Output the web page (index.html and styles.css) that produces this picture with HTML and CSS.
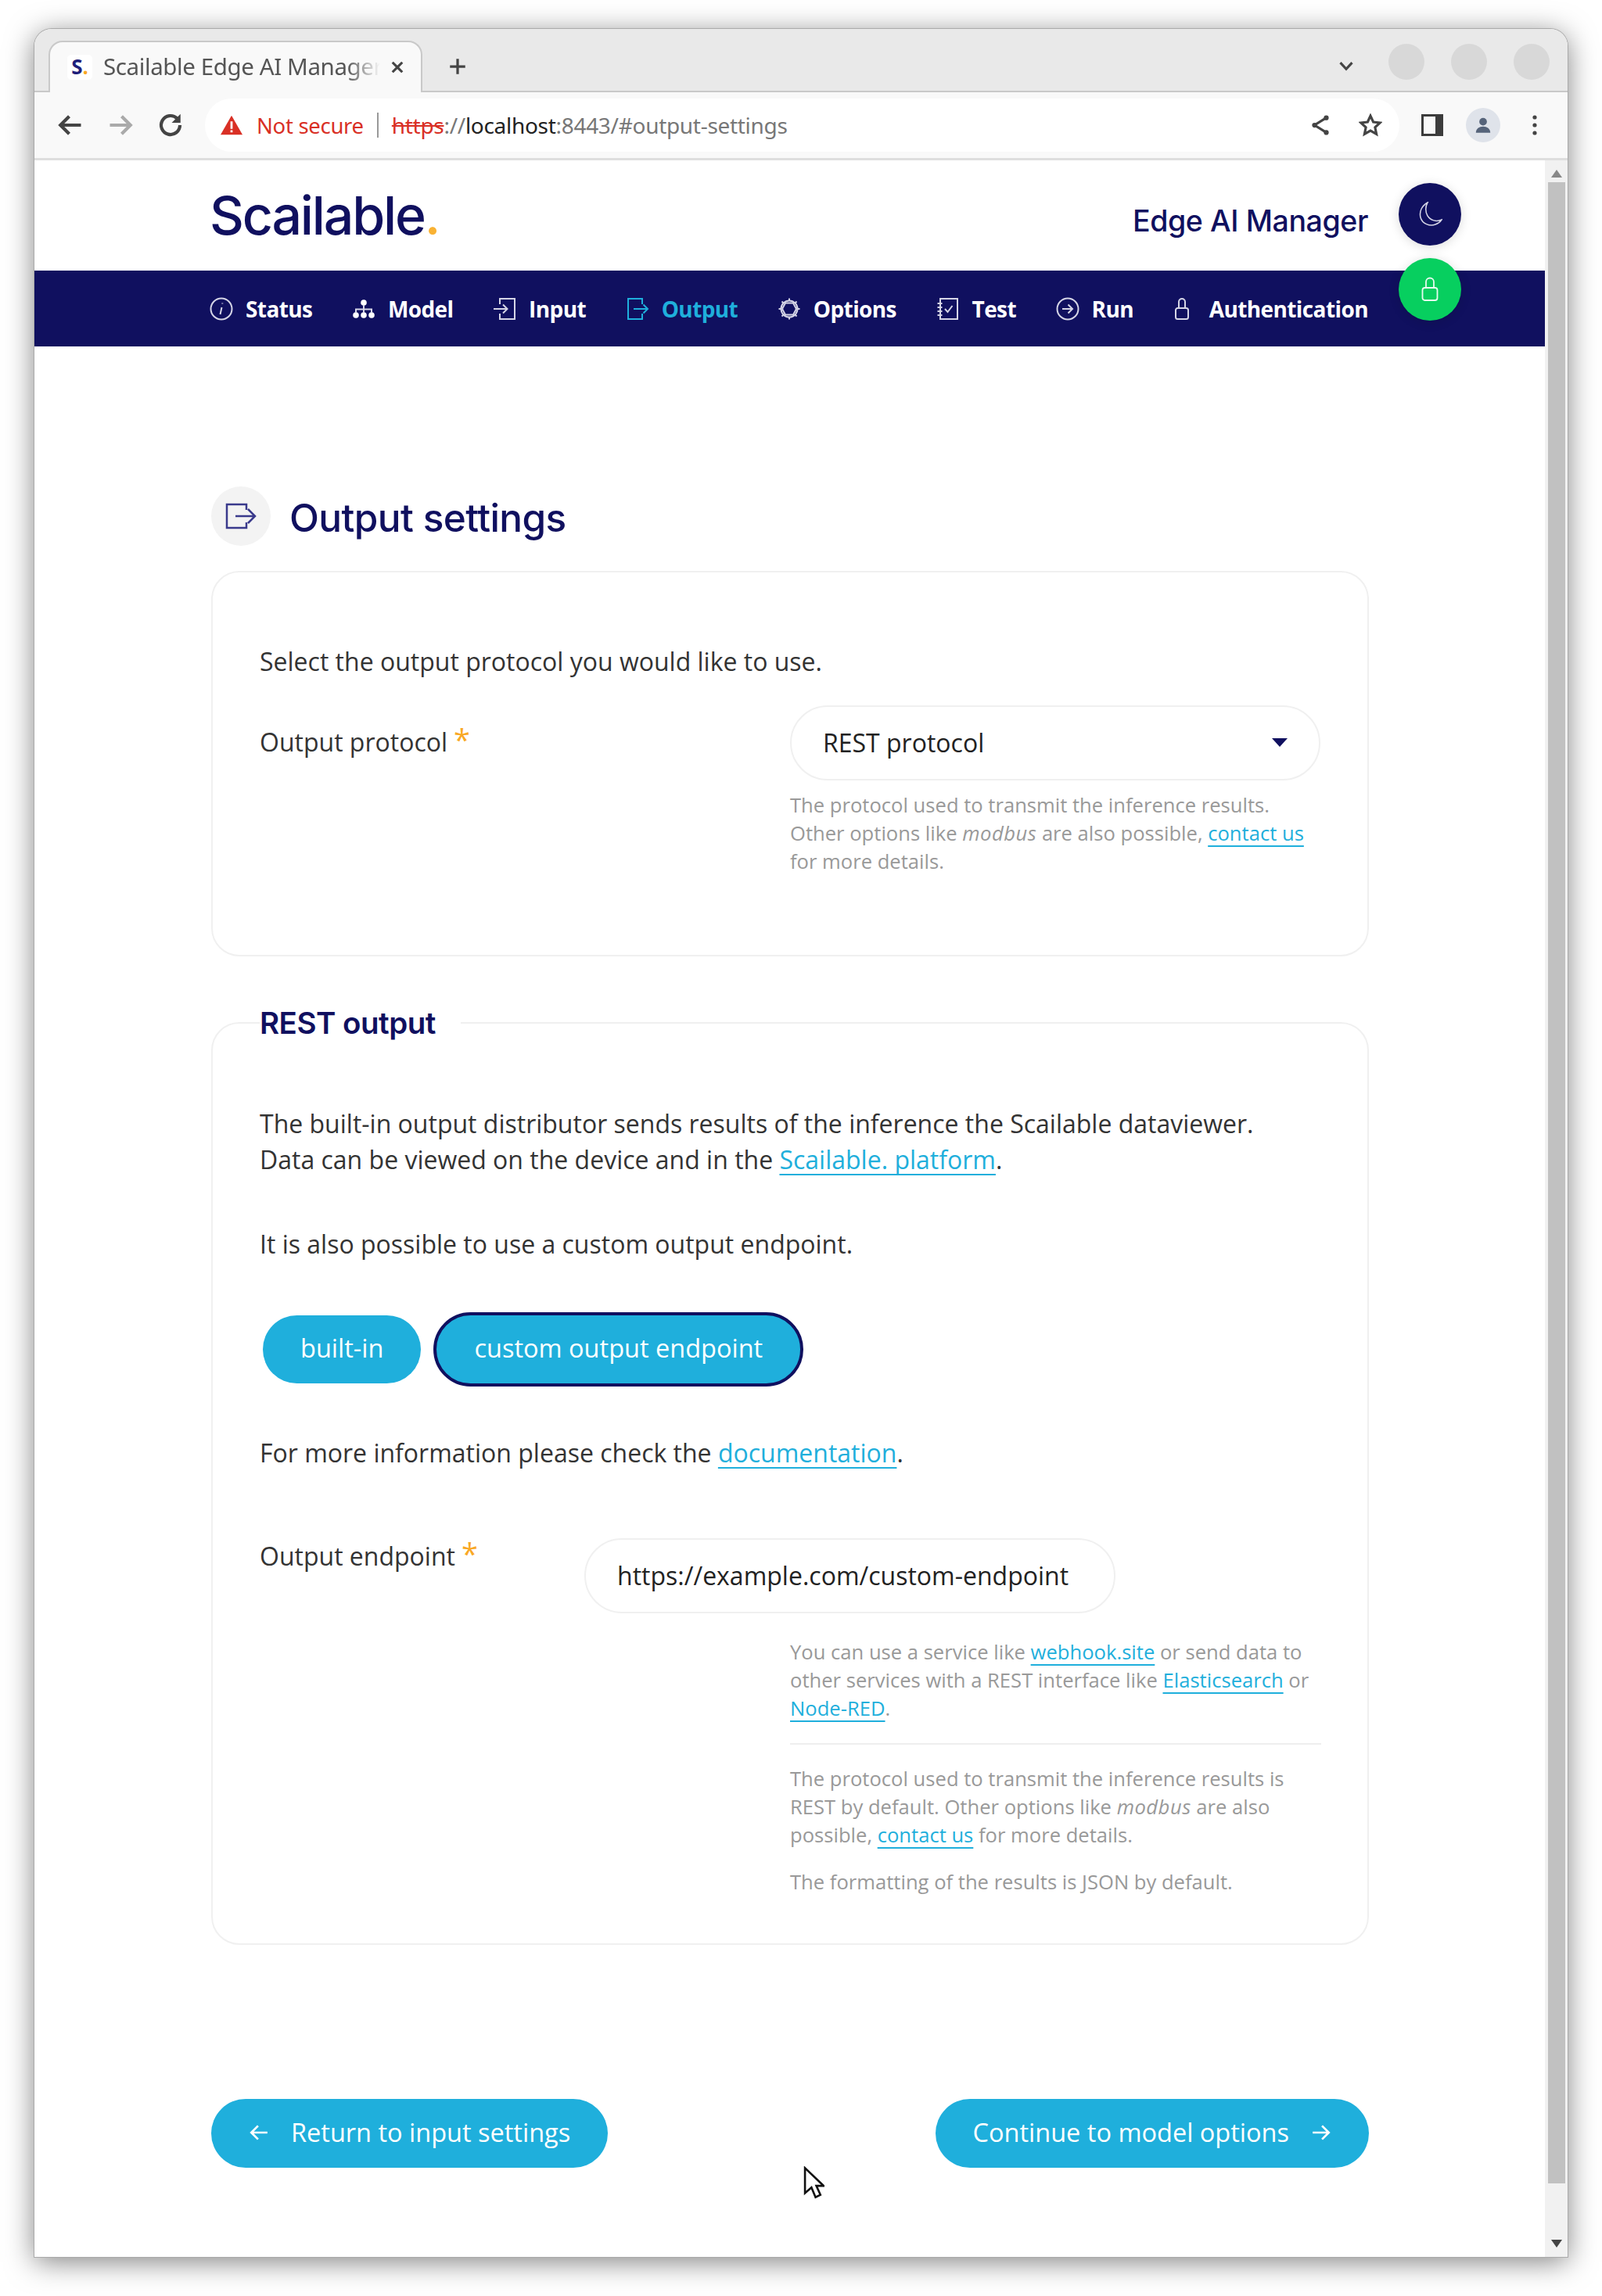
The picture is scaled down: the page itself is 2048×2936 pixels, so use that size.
FILE: index.html
```html
<!DOCTYPE html>
<html lang="en">
<head>
<meta charset="utf-8">
<title>Scailable Edge AI Manager</title>
<link rel="stylesheet" href="styles.css">
</head>
<body>
<div class="window">
  <div class="tabbar">
    <div class="tab">
      <span class="favicon">S<i>.</i></span>
      <span class="tab-title">Scailable Edge AI Manager</span>
      <svg class="tab-close" viewBox="0 0 16 16"><path d="M3 3l10 10M13 3L3 13"/></svg>
    </div>
    <svg class="new-tab" viewBox="0 0 24 24"><path d="M12 3v18M3 12h18"/></svg>
    <div class="tabbar-right">
      <svg class="tab-list" viewBox="0 0 16 10"><path d="M2 1.5l6 6.5 6-6.5"/></svg>
      <span class="win-dot"></span><span class="win-dot"></span><span class="win-dot"></span>
    </div>
  </div>
  <div class="toolbar">
    <svg class="tool" viewBox="0 0 24 24"><path d="M21 12H4M11 4.500L3.500 12l7.500 7.500"/></svg>
    <svg class="tool tool-off" viewBox="0 0 24 24"><path d="M3 12h17M13 4.500l7.500 7.500-7.500 7.500"/></svg>
    <svg class="tool" viewBox="0 0 24 24"><path d="M20 12a8 8 0 1 1-2.400-5.700"/><path class="solid" d="M20.500 2.500v7.500H13z"/></svg>
    <div class="omnibox">
      <svg class="warn" viewBox="0 0 30 26"><path class="warn-tri" d="M15 0l15 26H0z"/><path class="warn-mark" d="M13.500 8h3v10h-3zM13.500 20h3v3h-3z"/></svg>
      <span class="not-secure">Not secure</span>
      <span class="omni-sep"></span>
      <span class="url"><s>https</s>://<b>localhost</b>:8443/#output-settings</span>
      <svg class="omni-icon share" viewBox="0 0 24 24"><path d="M18 4.500L6 12l12 7.500"/><circle cx="18" cy="4.500" r="2.500"/><circle cx="6" cy="12" r="2.500"/><circle cx="18" cy="19.500" r="2.500"/></svg>
      <svg class="omni-icon star" viewBox="0 0 24 24"><path d="M12 2.500l2.900 6.300 6.900.8-5.100 4.700 1.400 6.800-6.100-3.400-6.100 3.400 1.400-6.800-5.100-4.700 6.900-.8z"/></svg>
    </div>
    <div class="toolbar-right">
      <svg class="sidepanel" viewBox="0 0 28 28"><path d="M0 0h28v28H0z M3 3v22h15V3z" fill-rule="evenodd"/></svg>
      <span class="avatar"><svg viewBox="0 0 24 24"><circle cx="12" cy="8" r="4.500"/><path d="M3.500 21c0-5 4-7.500 8.500-7.500s8.500 2.500 8.500 7.500z"/></svg></span>
      <svg class="kebab" viewBox="0 0 6 28"><circle cx="3" cy="4" r="2.600"/><circle cx="3" cy="14" r="2.600"/><circle cx="3" cy="24" r="2.600"/></svg>
    </div>
  </div>
  <div class="viewport">
    <div class="page">
      <header class="masthead">
        <div class="logo">Scailable<i>.</i></div>
        <div class="product">Edge AI Manager</div>
      </header>
      <nav class="nav">
        <a class="nav-item"><svg viewBox="0 0 30 30"><circle cx="15" cy="15" r="13.500"/><path d="M15.500 13l-2 9M16.300 7.500v1"/></svg>Status</a>
        <a class="nav-item"><svg viewBox="0 0 30 30"><g class="fill"><circle cx="15" cy="7" r="3.800"/><circle cx="5" cy="23" r="3.800"/><circle cx="15" cy="23" r="3.800"/><circle cx="25" cy="23" r="3.800"/></g><path d="M15 10v10M5 20v-4.500h20V20"/></svg>Model</a>
        <a class="nav-item"><svg viewBox="0 0 30 30"><path d="M9 9V2h19v26H9v-7M1 15h17M13 9.500l5.500 5.500-5.500 5.500"/></svg>Input</a>
        <a class="nav-item active"><svg viewBox="0 0 30 30"><path d="M21 9V2H3v26h18v-7M10 15h18M22.500 9.500L28 15l-5.500 5.500"/></svg>Output</a>
        <a class="nav-item"><svg viewBox="0 0 30 30"><circle cx="15" cy="15" r="10.500"/><path d="M15 1.500v3M15 25.500v3M1.500 15h3M25.500 15h3M5.500 5.500l2.200 2.200M22.300 22.300l2.200 2.200M24.500 5.500l-2.200 2.200M7.700 22.300l-2.200 2.200"/><path d="M10 7.500h10l4 7.500-4 7.500H10L6 15z"/></svg>Options</a>
        <a class="nav-item"><svg viewBox="0 0 30 30"><path d="M5 2h22v26H5zM1.500 8h6M1.500 13h6M1.500 18h6M1.500 23h6M11 15l3.500 4 6-8"/></svg>Test</a>
        <a class="nav-item"><svg viewBox="0 0 30 30"><circle cx="15" cy="15" r="13.500"/><path d="M8 15h13M15.500 9.500L21 15l-5.500 5.500"/></svg>Run</a>
        <a class="nav-item nav-auth"><svg class="lock" viewBox="0 0 22 30"><path d="M7 14V6a4 4 0 0 1 8 0v8M5.500 14h11a2.500 2.500 0 0 1 2.500 2.500v9a2.500 2.500 0 0 1-2.500 2.500h-11A2.500 2.500 0 0 1 3 25.500v-9A2.500 2.500 0 0 1 5.500 14z"/></svg>Authentication</a>
      </nav>
      <button class="fab fab-moon"><svg viewBox="0 0 32 32"><path d="M13 1C6 5 2 12 4 20c2 8 12 12 19 9 3-1 6-3 8-6-7 3-14 1-18-5C10 13 10 6 13 1z"/></svg></button>
      <button class="fab fab-lock"><svg viewBox="0 0 22 32"><path d="M6 14V6.500a5 5 0 0 1 10 0V14M4.500 14h13A3 3 0 0 1 20.500 17v10a3 3 0 0 1-3 3h-13a3 3 0 0 1-3-3V17a3 3 0 0 1 3-3z"/></svg></button>

      <main class="content">
        <div class="title-row">
          <span class="title-icon"><svg viewBox="0 0 40 34"><path d="M27 9V2H2v30h25v-7M13 17h25M29 8l9 9-9 9"/></svg></span>
          <h1 class="title">Output settings</h1>
        </div>

        <section class="card card-first">
          <p class="lead">Select the output protocol you would like to use.</p>
          <div class="field">
            <label class="label">Output protocol<span class="req">*</span></label>
            <div class="control">
              <div class="select">REST protocol<span class="caret"></span></div>
              <p class="help">The protocol used to transmit the inference results. Other options like <em>modbus</em> are also possible, <a class="link">contact us</a> for more details.</p>
            </div>
          </div>
        </section>

        <fieldset class="card card-second">
          <legend class="legend">REST output</legend>
          <p class="text">The built-in output distributor sends results of the inference the Scailable dataviewer.<br>Data can be viewed on the device and in the <a class="link">Scailable. platform</a>.</p>
          <p class="text text-second">It is also possible to use a custom output endpoint.</p>
          <div class="choice">
            <button class="btn btn-small">built-in</button>
            <button class="btn btn-small btn-selected">custom output endpoint</button>
          </div>
          <p class="text text-more">For more information please check the <a class="link">documentation</a>.</p>
          <div class="endpoint">
            <label class="label">Output endpoint<span class="req">*</span></label>
            <div class="input">https://example.com/custom-endpoint</div>
          </div>
          <div class="notes">
            <p class="help">You can use a service like <a class="link">webhook.site</a> or send data to other services with a REST interface like <a class="link">Elasticsearch</a> or <a class="link">Node-RED</a>.</p>
            <hr class="rule">
            <p class="help">The protocol used to transmit the inference results is REST by default. Other options like <em>modbus</em> are also possible, <a class="link">contact us</a> for more details.</p>
            <p class="help help-last">The formatting of the results is JSON by default.</p>
          </div>
        </fieldset>

        <div class="pager">
          <button class="btn btn-big"><svg viewBox="0 0 24 24"><path d="M22 12H3M11 4l-8 8 8 8"/></svg>Return to input settings</button>
          <button class="btn btn-big">Continue to model options<svg viewBox="0 0 24 24"><path d="M2 12h19M13 4l8 8-8 8"/></svg></button>
        </div>
      </main>
      <svg class="cursor" viewBox="0 0 26 40"><path d="M2 2v31l8-7 5 12 6-3-5-11h9z"/></svg>
    </div>
    <div class="scrollbar">
      <span class="arrow-up"></span>
      <span class="thumb"></span>
      <span class="arrow-down"></span>
    </div>
  </div>
</div>
</body>
</html>
```
FILE: styles.css
```css
* { box-sizing: border-box; }
html, body { margin: 0; padding: 0; background: #fff; }
body { width: 2048px; height: 2936px; padding: 37px 0 0 44px; font-family: "Open Sans", sans-serif; color: #333; overflow: hidden; }
svg { display: block; }

.window { width: 1960px; height: 2849px; border-radius: 22px 22px 0 0; display: flex; flex-direction: column; overflow: hidden; box-shadow: 0 0 0 1px #aaa, 0 6px 36px rgba(0,0,0,.5); background: #fff; }

.tabbar { height: 81px; flex: none; background: #e9e9e9; border-bottom: 2px solid #c9c9c9; display: flex; align-items: flex-end; padding-left: 18px; }
.tab { width: 478px; height: 66px; margin-bottom: -2px; background: #f9f9f9; border: 2px solid #c9c9c9; border-bottom: 0; border-radius: 18px 18px 0 0; display: flex; align-items: center; padding: 0 10px 0 22px; }
.favicon { width: 32px; height: 32px; border-radius: 5px; background: #fff; font: 700 26px/30px "Open Sans", sans-serif; color: #1f1f7a; text-align: center; flex: none; }
.favicon i { color: #f9a825; font-style: normal; }
.tab-title { margin: 0 0 3px 14px; width: 354px; flex: none; white-space: nowrap; overflow: hidden; font: 29.500px "Noto Sans", sans-serif; color: #555; letter-spacing: -.4px; -webkit-mask-image: linear-gradient(to right, #000 88%, transparent 100%); mask-image: linear-gradient(to right, #000 88%, transparent 100%); }
.tab-close { width: 20px; height: 20px; margin-left: 12px; fill: none; stroke: #444; stroke-width: 2.500; flex: none; }
.new-tab { width: 26px; height: 26px; margin: 0 0 18px 32px; fill: none; stroke: #444; stroke-width: 3; }
.tabbar-right { margin-left: auto; display: flex; align-items: center; height: 100%; padding-right: 23px; gap: 34px; }
.tab-list { width: 20px; height: 13px; margin-right: 10px; margin-top: 16px; fill: none; stroke: #444; stroke-width: 2.500; }
.win-dot { width: 46px; height: 46px; border-radius: 50%; background: #d8d8d8; margin-top: 5px; }

.toolbar { height: 87px; flex: none; background: #f9f9f9; border-bottom: 3px solid #dedede; display: flex; align-items: center; padding: 0 0 0 28px; }
.tool { width: 36px; height: 36px; margin-right: 28px; fill: none; stroke: #444; stroke-width: 2.800; flex: none; }
.tool-off { stroke: #aaa; }
.tool .solid { fill: #444; stroke: none; }
.omnibox { flex: 1; height: 68px; margin-left: -2px; background: #fff; border-radius: 34px; display: flex; align-items: center; padding: 0 22px 0 20px; }
.warn { width: 28px; height: 26px; margin-right: 18px; flex: none; }
.warn-tri { fill: #d93025; }
.warn-mark { fill: #fff; }
.not-secure { font: 27.500px "Noto Sans", sans-serif; color: #d93025; letter-spacing: -.3px; white-space: nowrap; }
.omni-sep { width: 2px; height: 32px; background: #999; margin: 0 17px; flex: none; }
.url { font: 28px "Noto Sans", sans-serif; color: #777; letter-spacing: -.3px; white-space: nowrap; }
.url s { color: #d93025; }
.url b { font-weight: 400; color: #222; }
.omni-icon { width: 30px; height: 30px; flex: none; fill: none; stroke: #444; stroke-width: 2.500; }
.share { margin-left: auto; margin-right: 34px; }
.share circle { fill: #444; stroke: none; }
.toolbar-right { display: flex; align-items: center; padding-left: 28px; flex: none; }
.sidepanel { width: 28px; height: 28px; fill: #3c3c3c; flex: none; }
.avatar { width: 44px; height: 44px; border-radius: 50%; background: #dfe3ea; margin-left: 29px; display: flex; align-items: center; justify-content: center; flex: none; }
.avatar svg { width: 26px; height: 26px; fill: #56647a; }
.kebab { width: 6px; height: 28px; margin-left: 41px; margin-right: 39px; fill: #444; flex: none; }

.viewport { flex: 1; min-height: 0; display: flex; }
.page { flex: 1; position: relative; min-width: 0; }
.scrollbar { width: 29px; flex: none; background: #f1f1f1; display: flex; flex-direction: column; align-items: center; padding: 12px 0; }
.arrow-up { border: 7px solid transparent; border-top: 0; border-bottom: 10px solid #888; }
.thumb { width: 22px; flex: 1; margin: 6px 0 72px; background: #c1c1c1; }
.arrow-down { border: 7px solid transparent; border-bottom: 0; border-top: 10px solid #444; }

.masthead { height: 141px; padding: 0 226px 0 226px; display: flex; justify-content: space-between; }
.logo { font: 500 68px/1 Inter, sans-serif; color: #10105f; letter-spacing: -2.200px; margin-top: 36px; margin-left: -2px; }
.logo i { font-style: normal; color: #f9b233; }
.product { font: 500 37.500px/1 Inter, sans-serif; color: #10105f; margin-top: 59px; letter-spacing: -.4px; }

.nav { height: 97px; background: #10105f; padding: 0 226px 0 224px; display: flex; align-items: center; justify-content: space-between; }
.nav-item { display: flex; align-items: center; gap: 16px; font: 700 28px "Open Sans", sans-serif; letter-spacing: -.6px; color: #fff; }
.nav-item svg { width: 30px; height: 30px; fill: none; stroke: #d5d5e6; stroke-width: 2; }
.nav-item svg .fill { fill: #fff; stroke: none; }
.nav-item .lock { width: 22px; }
.nav-auth { gap: 24px; }
.nav-item.active { color: #1fafdc; }
.nav-item.active svg { stroke: #1fafdc; }

.fab { position: absolute; right: 107px; width: 80px; height: 80px; border-radius: 50%; border: 0; padding: 0; display: flex; align-items: center; justify-content: center; box-shadow: 0 2px 14px rgba(0,0,0,.14); }
.fab-moon { top: 29px; background: #10105f; }
.fab-moon svg { width: 32px; height: 32px; fill: none; stroke: #d5d5e6; stroke-width: 1.500; }
.fab-lock { top: 125px; background: #07cf5f; }
.fab-lock svg { width: 22px; height: 32px; fill: none; stroke: #e6fbef; stroke-width: 1.800; }

.content { width: 1480px; margin-left: 226px; padding-top: 179px; }
.title-row { display: flex; align-items: center; gap: 24px; height: 76px; }
.title-icon { width: 76px; height: 76px; border-radius: 50%; background: #f3f3f3; display: flex; align-items: center; justify-content: center; }
.title-icon svg { width: 40px; height: 34px; fill: none; stroke: #3a3a8c; stroke-width: 2.500; }
.title { margin: 6px 0 0; font: 500 49.500px/1 Inter, sans-serif; color: #10105f; letter-spacing: -.6px; }

.card { border: 2px solid #f0f0f0; border-radius: 36px; margin: 0; min-width: 0; }
.card-first { margin-top: 32px; height: 493px; padding: 91px 60px 0; }
.lead { margin: 0; font-size: 32px; line-height: 46px; }
.field { display: flex; margin-top: 33px; }
.label { font-size: 32px; line-height: 46px; }
.req { color: #f9a825; font-size: 38px; margin-left: 8px; position: relative; top: -1px; line-height: 0; }
.field > .label { width: 678px; margin-top: 24px; flex: none; }
.control { flex: 1; }
.select { height: 96px; border: 2px solid #f0f0f0; border-radius: 48px; padding: 0 40px 2px; display: flex; align-items: center; justify-content: space-between; font-size: 32px; color: #222; }
.caret { border: 10px solid transparent; border-bottom: 0; border-top: 11px solid #10105f; }
.help { margin: 14px 0 0; font-size: 25.600px; line-height: 36px; color: #999; }
.help em { font-style: italic; letter-spacing: .5px; }
.link { color: #1fafdc; text-decoration: underline; text-decoration-thickness: 2px; text-underline-offset: 6px; text-decoration-skip-ink: none; }

.card-second { margin-top: 66px; height: 1198px; padding: 0 60px; display: block; }
.legend { font: 600 38.500px/1 Inter, sans-serif; color: #10105f; padding: 0 32px 0 0; margin-left: 0; letter-spacing: -.5px; }
.text { margin: 0; font-size: 32px; line-height: 46px; }
.card-second > .text:first-of-type { margin-top: 86px; }
.text-second { margin-top: 62px; }
.choice { display: flex; align-items: center; gap: 16px; margin-top: 64px; padding-left: 4px; }
.btn { border: 0; color: #fff; background: #1fafdc; font: 32.500px "Open Sans", sans-serif; display: inline-flex; align-items: center; }
.btn-small { height: 87px; padding: 0 48px 3px; border-radius: 44px; }
.btn-selected { height: 95px; padding: 0 48px 3px; border: 4px solid #10105f; border-radius: 48px; }
.text-more { margin-top: 62px; }
.endpoint { display: flex; margin-top: 88px; }
.endpoint .label { width: 415px; flex: none; margin-top: -2px; }
.input { width: 679px; height: 96px; border: 2px solid #f0f0f0; border-radius: 48px; padding: 0 40px; display: flex; align-items: center; font-size: 32px; color: #222; margin-top: -2px; }
.notes { margin-left: 678px; width: 679px; margin-top: 32px; }
.rule { border: 0; height: 2px; background: #eee; margin: 26px 0 26px; }
.notes .help { margin-top: 0; }
.notes .help-last { margin-top: 24px; }

.pager { display: flex; justify-content: space-between; margin-top: 197px; }
.btn-big { height: 88px; border-radius: 44px; padding: 0 48px 3px; gap: 28px; }
.btn-big svg { width: 26px; height: 26px; fill: none; stroke: #fff; stroke-width: 2.500; }

.cursor { position: absolute; left: 983px; top: 2565px; width: 27px; height: 42px; fill: #fff; stroke: #111; stroke-width: 2.500; }
```
